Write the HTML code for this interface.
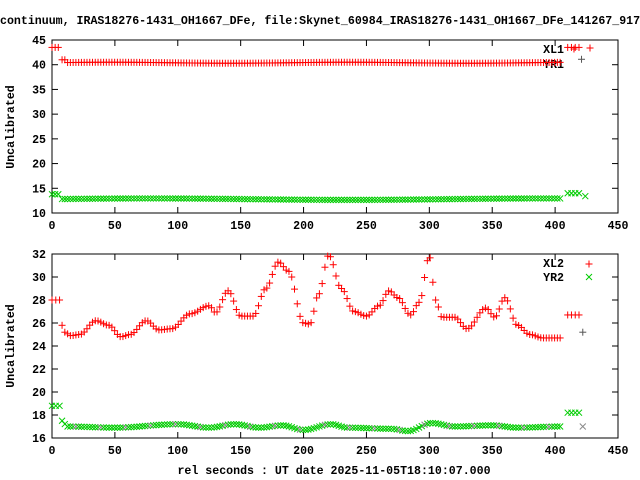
<!DOCTYPE html>
<html><head><meta charset="utf-8"><style>
html,body{margin:0;padding:0;background:#fff;width:640px;height:480px;overflow:hidden}
svg text{font-family:"Liberation Mono",monospace;font-weight:bold;font-size:11.6px;fill:#000}
</style></head><body>
<svg id="s" width="640" height="480" xmlns="http://www.w3.org/2000/svg">
<text x="0" y="24">continuum, IRAS18276-1431_OH1667_DFe, file:Skynet_60984_IRAS18276-1431_OH1667_DFe_141267_917</text>
<text transform="translate(14,127) rotate(-90)" text-anchor="middle">Uncalibrated</text>
<text transform="translate(14,346) rotate(-90)" text-anchor="middle">Uncalibrated</text>
<text x="334" y="474" text-anchor="middle">rel seconds : UT date 2025-11-05T18:10:07.000</text>
<text x="564" y="53" text-anchor="end">XL1</text>
<text x="564" y="68" text-anchor="end">YR1</text>
<text x="564" y="267" text-anchor="end">XL2</text>
<text x="564" y="281" text-anchor="end">YR2</text>
<g id="g" stroke-width="1" fill="none"></g>
</svg>
<script>
var g=document.getElementById('g'),s=document.getElementById('s'),h='';
var L=52,R=618;
function X(v){return L+(R-L)*v/450;}
function line(x1,y1,x2,y2,c){h+='<line x1="'+x1+'" y1="'+y1+'" x2="'+x2+'" y2="'+y2+'" stroke="'+c+'"/>';}
function plus(x,y,c){line(x-3.5,y,x+3.5,y,c);line(x,y-3.5,x,y+3.5,c);}
function cross(x,y,c){line(x-3,y-3,x+3,y+3,c);line(x-3,y+3,x+3,y-3,c);}
function tx(x,y,t,a){h+='<text x="'+x+'" y="'+y+'" text-anchor="'+(a||'middle')+'">'+t+'</text>';}
function frame(T,B,y0,y1,step){
 h+='<rect x="'+L+'" y="'+T+'" width="'+(R-L)+'" height="'+(B-T)+'" fill="none" stroke="#000"/>';
 for(var v=0;v<=450;v+=50){var x=X(v);line(x,B,x,B-6,'#000');line(x,T,x,T+6,'#000');tx(x,B+16,v);}
 for(var v=y0;v<=y1;v+=step){var y=B-(B-T)*(v-y0)/(y1-y0);line(L,y,L+6,y,'#000');line(R,y,R-6,y,'#000');tx(L-6,y+4,v,'end');}
}
frame(40,213,10,45,5);frame(254,438,16,32,2);
function Y1(v){return 213-173*(v-10)/35;}
function Y2(v){return 438-184*(v-16)/16;}
function interp(k,x){for(var i=0;i<k.length-1;i++){if(x>=k[i][0]&&x<=k[i+1][0]){var t=(x-k[i][0])/(k[i+1][0]-k[i][0]);t=(1-Math.cos(Math.PI*t))/2;return k[i][1]+(k[i+1][1]-k[i][1])*t;}}return k[k.length-1][1];}
// top
[0,2.5,5].forEach(function(v){plus(X(v),Y1(43.5),'red');cross(X(v),Y1(13.8),'#0c0');});
for(var v=8;v<=405;v+=2.2){plus(X(v),Y1(v<12?41:40.4+0.1*Math.sin(v/30)),'red');cross(X(v),Y1(12.8+0.15*Math.sin(v/50)),'#0c0');}
[410,413,416,419].forEach(function(v){plus(X(v),Y1(43.5),'red');cross(X(v),Y1(14),'#0c0');});
plus(X(421),Y1(41.1),'#555');cross(X(424),Y1(13.4),'#0c0');
plus(590,48,'red');plus(X(415),49,'red');
// bottom
var kr=[[8,25.8],[10,25.2],[15,24.9],[22,25],[35,26.2],[45,25.8],[55,24.8],[62,25],[75,26.2],[85,25.4],[95,25.5],[110,26.8],[125,27.5],[130,26.9],[140,28.8],[150,26.6],[160,26.6],[170,29],[180,31.3],[188,30.5],[200,26],[205,25.9],[212,28.5],[220,31.9],[230,29],[240,27],[250,26.6],[260,27.5],[268,28.8],[275,28.2],[285,26.7],[292,27.8],[300,31.8],[305,28],[310,26.5],[320,26.5],[330,25.5],[345,27.3],[352,26.5],[360,28.2],[370,25.8],[380,25],[390,24.7],[405,24.7]];
var kg=[[8,17.5],[12,17],[50,16.9],[100,17.2],[125,16.9],[145,17.2],[165,16.9],[183,17.1],[200,16.7],[222,17.2],[235,16.9],[270,16.8],[283,16.6],[302,17.3],[320,17],[350,17.1],[370,16.9],[405,17]];
[0,3,6].forEach(function(v){plus(X(v),Y2(28),'red');cross(X(v),Y2(18.8),'#0c0');});
for(var v=8;v<=405;v+=2.2){plus(X(v),Y2(interp(kr,v)),'red');cross(X(v),Y2(interp(kg,v)),(Math.round(v/2.2)%9==0)?'#888':'#0c0');}
[410,413,416,419].forEach(function(v){plus(X(v),Y2(26.7),'red');cross(X(v),Y2(18.2),'#0c0');});
plus(X(422),Y2(25.2),'#555');cross(X(422),Y2(17),'#888');
plus(589,264,'red');cross(589,277,'#0c0');
g.innerHTML=h;
</script>
</body></html>
